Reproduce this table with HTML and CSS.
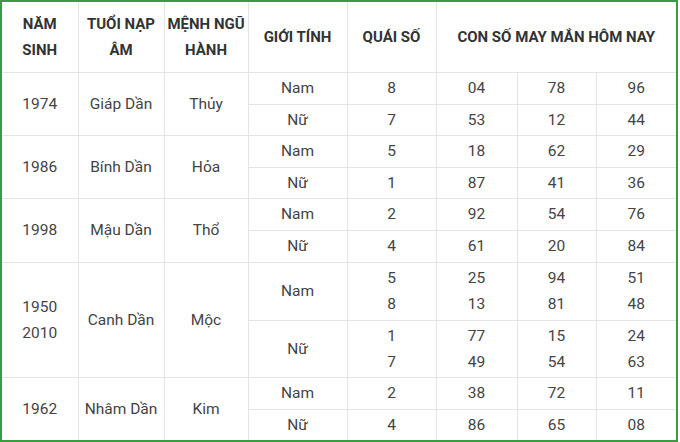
FILE: index.html
```html
<!DOCTYPE html>
<html lang="vi">
<head>
<meta charset="utf-8">
<title>Con số may mắn</title>
<link rel="stylesheet" href="styles.css">
</head>
<body>
<div class="frame">
<table class="luck">
<colgroup>
<col class="c-year"><col class="c-tuoi"><col class="c-menh"><col class="c-gt"><col class="c-qs"><col class="c-n1"><col class="c-n2"><col class="c-n3">
</colgroup>
<thead>
<tr class="head">
<th>NĂM<br>SINH</th>
<th>TUỔI NẠP<br>ÂM</th>
<th>MỆNH NGŨ<br>HÀNH</th>
<th>GIỚI TÍNH</th>
<th>QUÁI SỐ</th>
<th colspan="3">CON SỐ MAY MẮN HÔM NAY</th>
</tr>
</thead>
<tbody>
<tr class="r32"><td rowspan="2">1974</td><td rowspan="2">Giáp Dần</td><td rowspan="2">Thủy</td><td>Nam</td><td>8</td><td>04</td><td>78</td><td>96</td></tr>
<tr class="r31"><td>Nữ</td><td>7</td><td>53</td><td>12</td><td>44</td></tr>
<tr class="r32"><td rowspan="2">1986</td><td rowspan="2">Bính Dần</td><td rowspan="2">Hỏa</td><td>Nam</td><td>5</td><td>18</td><td>62</td><td>29</td></tr>
<tr class="r31"><td>Nữ</td><td>1</td><td>87</td><td>41</td><td>36</td></tr>
<tr class="r32"><td rowspan="2">1998</td><td rowspan="2">Mậu Dần</td><td rowspan="2">Thổ</td><td>Nam</td><td>2</td><td>92</td><td>54</td><td>76</td></tr>
<tr class="r32"><td>Nữ</td><td>4</td><td>61</td><td>20</td><td>84</td></tr>
<tr class="r58"><td rowspan="2">1950<br>2010</td><td rowspan="2">Canh Dần</td><td rowspan="2">Mộc</td><td>Nam</td><td>5<br>8</td><td>25<br>13</td><td>94<br>81</td><td>51<br>48</td></tr>
<tr class="r57"><td>Nữ</td><td>1<br>7</td><td>77<br>49</td><td>15<br>54</td><td>24<br>63</td></tr>
<tr class="r32"><td rowspan="2">1962</td><td rowspan="2">Nhâm Dần</td><td rowspan="2">Kim</td><td>Nam</td><td>2</td><td>38</td><td>72</td><td>11</td></tr>
<tr class="r31"><td>Nữ</td><td>4</td><td>86</td><td>65</td><td>08</td></tr>
</tbody>
</table>
</div>
</body>
</html>
```

FILE: styles.css
```css
html, body {
  margin: 0;
  padding: 0;
  background: #ffffff;
}

.frame {
  width: 674px;
  height: 438px;
  border: 2px solid #3a9c40;
  overflow: hidden;
  background: #fff;
}

.luck {
  width: 674px;
  table-layout: fixed;
  border-collapse: collapse;
  border-style: hidden;
  font-family: Roboto, "Liberation Sans", sans-serif;
  font-size: 15.5px;
  color: #444;
}

.c-year { width: 76px; }
.c-tuoi { width: 86px; }
.c-menh { width: 84px; }
.c-gt { width: 99px; }
.c-qs { width: 89px; }
.c-n1 { width: 81px; }
.c-n2 { width: 79px; }
.c-n3 { width: 80px; }

.luck th,
.luck td {
  border: 1px solid #e4e4e8;
  text-align: center;
  vertical-align: middle;
  padding: 0;
  line-height: 26px;
}

.luck th {
  font-size: 15px;
  font-weight: 700;
  color: #333;
}

.head { height: 70px; }
.r31 { height: 31px; }
.r32 { height: 32px; }
.r57 { height: 57px; }
.r58 { height: 58px; }
```
